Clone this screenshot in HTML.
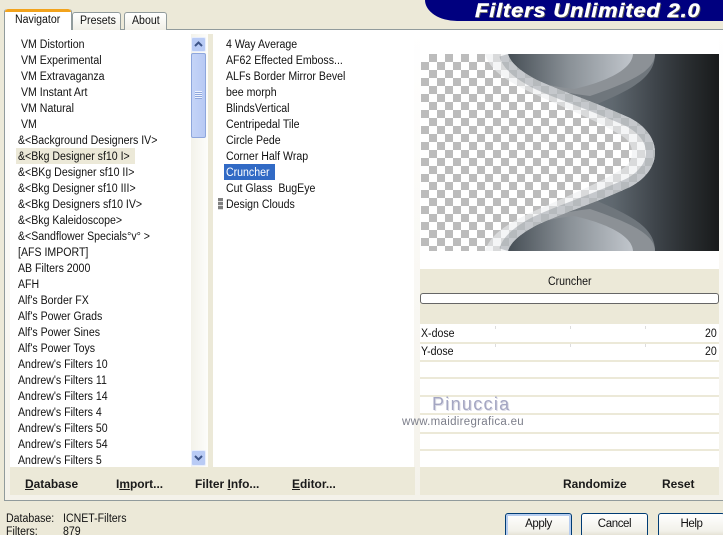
<!DOCTYPE html>
<html><head><meta charset="utf-8"><style>
html,body{margin:0;padding:0;width:723px;height:535px;overflow:hidden;background:#ece9d8}
body{position:relative;font-family:"Liberation Sans",sans-serif;font-size:12px;color:#111}
.a{position:absolute}
.t{position:absolute;white-space:nowrap;line-height:16px;height:16px;font-size:11.5px;margin-top:1px;transform:scaleX(.92);transform-origin:left center}
.b{position:absolute;white-space:nowrap;line-height:16px;font-size:12px;font-weight:bold;color:#1a1a1a;top:476px;transform:scaleX(.995);transform-origin:left center}
.r{position:absolute;left:420px;width:299px;background:#fff;border-bottom:2px solid #ece9d8;box-sizing:border-box}
.btn{position:absolute;top:513px;height:26px;box-sizing:border-box;border:1px solid #003c74;border-radius:3px;background:linear-gradient(#fff,#f2f1ea 70%,#dcd8c8);text-align:center;line-height:20px;font-size:11.5px;letter-spacing:-.4px}
.tick{position:absolute;width:1px;height:3px;background:#ddd}
</style></head><body>
<!-- banner -->
<div class="a" style="left:425px;top:0;width:298px;height:21px;background:#00007f;border-bottom-left-radius:32px 21px"></div>
<div class="a" style="left:475px;top:1px;font:italic bold 19px/21px 'Liberation Sans',sans-serif;color:#fff;white-space:nowrap;letter-spacing:.7px;-webkit-text-stroke:.4px #fff;text-shadow:1px 1px 0 #555;transform:scaleX(1.155);transform-origin:left center">Filters Unlimited 2.0</div>
<!-- panel -->
<div class="a" style="left:4px;top:29px;width:719px;height:472px;box-sizing:border-box;border:1px solid #919b9c;border-right:0;background:linear-gradient(#fff,#f4f2ea)"></div>
<!-- tabs -->
<div class="a" style="left:72px;top:12px;width:49px;height:18px;box-sizing:border-box;border:1px solid #919b9c;border-bottom:0;border-radius:3px 3px 0 0;background:linear-gradient(#fff,#f0efe6)"></div>
<div class="t" style="left:80px;top:12px">Presets</div>
<div class="a" style="left:124px;top:12px;width:43px;height:18px;box-sizing:border-box;border:1px solid #919b9c;border-bottom:0;border-radius:3px 3px 0 0;background:linear-gradient(#fff,#f0efe6)"></div>
<div class="t" style="left:132px;top:12px">About</div>
<div class="a" style="left:4px;top:9px;width:68px;height:21px;box-sizing:border-box;border:1px solid #919b9c;border-top:0;border-bottom:0;background:#fff;border-radius:3px 3px 0 0"></div>
<div class="a" style="left:5px;top:9px;width:66px;height:3px;background:#f2a31c;border-radius:3px 3px 0 0"></div>
<div class="t" style="left:15px;top:11px">Navigator</div>
<!-- lists -->
<div class="a" style="left:10px;top:34px;width:181px;height:433px;background:#fff"></div>
<div class="a" style="left:191px;top:34px;width:17px;height:433px;background:linear-gradient(90deg,#f3f2ea,#fdfdfb)"></div>
<div class="a" style="left:208px;top:34px;width:5px;height:433px;background:#ece9d8"></div>
<div class="a" style="left:213px;top:34px;width:201px;height:433px;background:#fff"></div>
<div class="a" style="left:420px;top:34px;width:299px;height:235px;background:#fff"></div>
<!-- scrollbar -->
<div class="a" style="left:191px;top:37px;width:15px;height:15px;box-sizing:border-box;border:1px solid #e8eefc;border-radius:2px;background:#b9cbf5"></div>
<svg class="a" style="left:191px;top:37px" width="15" height="15"><path d="M4 9 L7.5 5.5 L11 9" fill="none" stroke="#3d5488" stroke-width="2"/></svg>
<div class="a" style="left:191px;top:53px;width:15px;height:85px;box-sizing:border-box;border:1px solid #8ea6dc;border-radius:2px;background:linear-gradient(90deg,#c5d4f7,#b7c9f4)"></div>
<div class="a" style="left:195px;top:91px;width:7px;height:8px;background:repeating-linear-gradient(#eef3fe 0 1px,#8ea6dc 1px 2px)"></div>
<div class="a" style="left:191px;top:450px;width:15px;height:16px;box-sizing:border-box;border:1px solid #e8eefc;border-radius:2px;background:#b9cbf5"></div>
<svg class="a" style="left:191px;top:450px" width="15" height="16"><path d="M4 6 L7.5 9.5 L11 6" fill="none" stroke="#3d5488" stroke-width="2"/></svg>
<!-- selected -->
<div class="a" style="left:16px;top:148px;width:119px;height:16px;background:#ece9d8"></div>
<div class="a" style="left:224px;top:164px;width:51px;height:16px;background:#316ac5"></div>
<div class="a" style="left:218px;top:198px;width:5px;height:12px;background:repeating-linear-gradient(#808080 0 3px,#ddd 3px 4px)"></div>
<!-- list 1 -->
<div class="t" style="left:21px;top:36px">VM Distortion</div>
<div class="t" style="left:21px;top:52px">VM Experimental</div>
<div class="t" style="left:21px;top:68px">VM Extravaganza</div>
<div class="t" style="left:21px;top:84px">VM Instant Art</div>
<div class="t" style="left:21px;top:100px">VM Natural</div>
<div class="t" style="left:21px;top:116px">VM</div>
<div class="t" style="left:18px;top:132px">&amp;&lt;Background Designers IV&gt;</div>
<div class="t" style="left:18px;top:148px">&amp;&lt;Bkg Designer sf10 I&gt;</div>
<div class="t" style="left:18px;top:164px">&amp;&lt;BKg Designer sf10 II&gt;</div>
<div class="t" style="left:18px;top:180px">&amp;&lt;Bkg Designer sf10 III&gt;</div>
<div class="t" style="left:18px;top:196px">&amp;&lt;Bkg Designers sf10 IV&gt;</div>
<div class="t" style="left:18px;top:212px">&amp;&lt;Bkg Kaleidoscope&gt;</div>
<div class="t" style="left:18px;top:228px">&amp;&lt;Sandflower Specials°v° &gt;</div>
<div class="t" style="left:18px;top:244px">[AFS IMPORT]</div>
<div class="t" style="left:18px;top:260px">AB Filters 2000</div>
<div class="t" style="left:18px;top:276px">AFH</div>
<div class="t" style="left:18px;top:292px">Alf's Border FX</div>
<div class="t" style="left:18px;top:308px">Alf's Power Grads</div>
<div class="t" style="left:18px;top:324px">Alf's Power Sines</div>
<div class="t" style="left:18px;top:340px">Alf's Power Toys</div>
<div class="t" style="left:18px;top:356px">Andrew's Filters 10</div>
<div class="t" style="left:18px;top:372px">Andrew's Filters 11</div>
<div class="t" style="left:18px;top:388px">Andrew's Filters 14</div>
<div class="t" style="left:18px;top:404px">Andrew's Filters 4</div>
<div class="t" style="left:18px;top:420px">Andrew's Filters 50</div>
<div class="t" style="left:18px;top:436px">Andrew's Filters 54</div>
<div class="t" style="left:18px;top:452px">Andrew's Filters 5</div>
<!-- list 2 -->
<div class="t" style="left:226px;top:36px">4 Way Average</div>
<div class="t" style="left:226px;top:52px">AF62 Effected Emboss...</div>
<div class="t" style="left:226px;top:68px">ALFs Border Mirror Bevel</div>
<div class="t" style="left:226px;top:84px">bee morph</div>
<div class="t" style="left:226px;top:100px">BlindsVertical</div>
<div class="t" style="left:226px;top:116px">Centripedal Tile</div>
<div class="t" style="left:226px;top:132px">Circle Pede</div>
<div class="t" style="left:226px;top:148px">Corner Half Wrap</div>
<div class="t" style="left:226px;top:164px;color:#fff">Cruncher</div>
<div class="t" style="left:226px;top:180px">Cut Glass&nbsp; BugEye</div>
<div class="t" style="left:226px;top:196px">Design Clouds</div>
<!-- preview -->
<svg class="a" style="left:421px;top:54px" width="298" height="197" viewBox="421 54 298 197">
<defs>
<pattern id="c" x="421" y="54" width="16" height="16" patternUnits="userSpaceOnUse"><rect width="16" height="16" fill="#fff"/><rect x="0" y="8" width="8" height="8" fill="#bcbcbc"/><rect x="8" y="0" width="8" height="8" fill="#bcbcbc"/></pattern>
<linearGradient id="bg" gradientUnits="userSpaceOnUse" x1="507" x2="718" y1="0" y2="0"><stop offset="0" stop-color="#7d878e"/><stop offset=".5" stop-color="#5f686f"/><stop offset=".7" stop-color="#3f454b"/><stop offset=".85" stop-color="#2a2e31"/><stop offset="1" stop-color="#191b1c"/></linearGradient>
<linearGradient id="lobe" gradientUnits="userSpaceOnUse" x1="507" x2="632" y1="0" y2="0"><stop offset="0" stop-color="#454d54"/><stop offset=".5" stop-color="#8a9197"/><stop offset="1" stop-color="#c0c5cb"/></linearGradient>
<clipPath id="sh"><path d="M421 54 H508 C511 64 522 72 537 80 C560 91 590 100 630 118 C645 126 655 138 655 152.5 C655 167 645 179 630 187 C590 205 560 214 537 225 C522 233 511 241 508 251 H421 Z"/></clipPath>
<g id="lobes">
<path d="M507 54 C512 78 545 98 597 104 C630 90 655 78 655 54 Z" fill="#6f767c"/>
<path d="M507 54 C512 74 535 90 590 96 C625 84 655 72 655 54 Z" fill="#8c9196"/>
<path d="M507 54 C512 72 528 84 574 89 C605 82 632 70 633 54 Z" fill="url(#lobe)"/>
</g>
</defs>
<rect x="421" y="54" width="298" height="197" fill="url(#bg)"/>
<use href="#lobes"/>
<g transform="matrix(1 0 0 -1 0 305)"><use href="#lobes"/></g>
<path d="M421 54 H508 C511 64 522 72 537 80 C560 91 590 100 630 118 C645 126 655 138 655 152.5 C655 167 645 179 630 187 C590 205 560 214 537 225 C522 233 511 241 508 251 H421 Z" fill="url(#c)"/>
<g clip-path="url(#sh)">
<path d="M485 54 C490 70 505 80 530 92 C565 108 600 122 622 136 C630 141 632 147 632 152.5 C632 158 630 164 622 169 C600 183 565 197 530 213 C505 225 490 235 485 251 H660 V54 Z" fill="#eceef0" fill-opacity=".6"/>
<path d="M508 54 C511 64 522 72 537 80 C560 91 590 100 630 118 C645 126 655 138 655 152.5 C655 167 645 179 630 187 C590 205 560 214 537 225 C522 233 511 241 508 251" fill="none" stroke="#8c9298" stroke-opacity=".45" stroke-width="18"/>
</g>
</svg>
<!-- right panel -->
<div class="a" style="left:420px;top:269px;width:299px;height:55px;background:#ece9d8"></div>
<div class="t" style="left:548px;top:273px">Cruncher</div>
<div class="a" style="left:420px;top:293px;width:299px;height:11px;box-sizing:border-box;border:1px solid #666;border-radius:3px;background:#fff"></div>
<div class="r" style="top:324px;height:20px"></div>
<div class="r" style="top:344px;height:18px"></div>
<div class="r" style="top:362px;height:17px"></div>
<div class="r" style="top:379px;height:18px"></div>
<div class="r" style="top:397px;height:18px"></div>
<div class="r" style="top:415px;height:19px"></div>
<div class="r" style="top:434px;height:17px"></div>
<div class="r" style="top:451px;height:16px;border:0"></div>
<div class="tick" style="left:495px;top:326px"></div><div class="tick" style="left:570px;top:326px"></div><div class="tick" style="left:645px;top:326px"></div>
<div class="tick" style="left:495px;top:344px"></div><div class="tick" style="left:570px;top:344px"></div><div class="tick" style="left:645px;top:344px"></div>
<div class="t" style="left:421px;top:325px">X-dose</div>
<div class="t" style="left:421px;top:343px">Y-dose</div>
<div class="t" style="right:6px;top:325px;transform-origin:right center">20</div>
<div class="t" style="right:6px;top:343px;transform-origin:right center">20</div>
<!-- watermark -->
<div class="a" style="left:432px;top:394px;font-size:18px;line-height:21px;letter-spacing:1.3px;color:#a4a6c2;white-space:nowrap;text-shadow:1px 1px 0 #dcdce6">Pinuccia</div>
<div class="a" style="left:402px;top:415px;font-size:11.5px;line-height:15px;letter-spacing:.3px;color:#7c7e8a;white-space:nowrap">www.maidiregrafica.eu</div>
<!-- bars -->
<div class="a" style="left:10px;top:467px;width:405px;height:28px;background:#ece9d8"></div>
<div class="a" style="left:420px;top:467px;width:299px;height:28px;background:#ece9d8"></div>
<div class="b" style="left:25px"><u>D</u>atabase</div>
<div class="b" style="left:116px">I<u>m</u>port...</div>
<div class="b" style="left:195px">Filter <u>I</u>nfo...</div>
<div class="b" style="left:292px"><u>E</u>ditor...</div>
<div class="b" style="left:563px">Randomize</div>
<div class="b" style="left:662px">Reset</div>
<!-- status -->
<div class="t" style="left:6px;top:510px">Database:</div>
<div class="t" style="left:63px;top:510px">ICNET-Filters</div>
<div class="t" style="left:6px;top:523px">Filters:</div>
<div class="t" style="left:63px;top:523px">879</div>
<!-- buttons -->
<div class="btn" style="left:505px;width:67px;box-shadow:inset 0 0 0 2px #b6cdf0">Apply</div>
<div class="btn" style="left:581px;width:67px">Cancel</div>
<div class="btn" style="left:658px;width:67px">Help</div>
</body></html>
